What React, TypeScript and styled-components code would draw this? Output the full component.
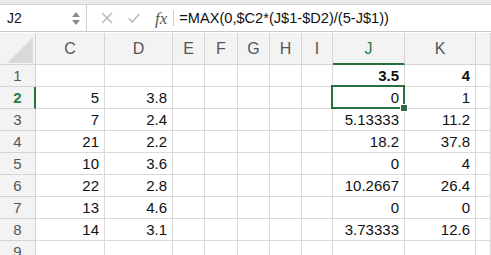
import React from "react";
import styled, { createGlobalStyle, css } from "styled-components";

const GlobalStyle = createGlobalStyle`
  html, body { margin: 0; padding: 0; background: #ffffff; }
  body { font-family: "Liberation Sans", Arial, sans-serif; overflow: hidden; }
  * { box-sizing: border-box; }
`;

const Page = styled.div`
  width: 491px;
  height: 255px;
  overflow: hidden;
  background: #ffffff;
`;

const TopStrip = styled.div`
  height: 5px;
  background: #e9e9e9;
  border-bottom: 1px solid #d2d2d2;
`;

const FormulaBar = styled.div`
  height: 27px;
  display: flex;
  align-items: stretch;
  border-bottom: 1px solid #c9c9c9;
  margin-bottom: 1px;
  background: #ffffff;
`;

const NameBox = styled.div`
  width: 87px;
  display: flex;
  align-items: center;
  justify-content: space-between;
  padding: 0 6px 0 7px;
  border-right: 1px solid #cfcfcf;
  font-size: 14px;
  color: #111;
`;

const Spinner = styled.div`
  display: flex;
  flex-direction: column;
  gap: 3px;
  align-items: center;
`;

const Tri = styled.div<{ $up?: boolean }>`
  width: 0;
  height: 0;
  border-left: 4px solid transparent;
  border-right: 4px solid transparent;
  ${(p) =>
    p.$up
      ? css`border-bottom: 5px solid #8a8a8a;`
      : css`border-top: 5px solid #8a8a8a;`}
`;

const Tools = styled.div`
  display: flex;
  align-items: center;
  padding-left: 14px;
  gap: 15px;
`;

const IconBox = styled.div`
  width: 12px;
  height: 12px;
  display: flex;
`;

const Fx = styled.div`
  font-family: "Liberation Serif", "Times New Roman", serif;
  font-style: italic;
  font-size: 17px;
  color: #555;
  padding-right: 6px;
  border-right: 1px solid #d0d0d0;
  height: 16px;
  line-height: 15px;
  display: flex;
  align-items: center;
`;

const Formula = styled.div`
  display: flex;
  align-items: center;
  padding-left: 5px;
  font-size: 14.6px;
  color: #111;
  white-space: nowrap;
`;

const Grid = styled.div`
  display: grid;
  grid-template-columns: 36px 69px 68px 32px 33px 32px 32px 31px 72px 71px 1fr;
  grid-auto-rows: 22px;
  grid-template-rows: 32px;
`;

const Corner = styled.div`
  background: #f3f3f3;
  border-right: 1px solid #d4d4d4;
  border-bottom: 1px solid #d4d4d4;
  display: flex;
  align-items: flex-end;
  justify-content: flex-end;
  padding: 0 2px 1px 0;
`;

const ColHead = styled.div<{ $sel?: boolean }>`
  background: #f3f3f3;
  border-right: 1px solid #d4d4d4;
  border-bottom: 1px solid #d4d4d4;
  display: flex;
  align-items: center;
  justify-content: center;
  font-size: 16px;
  color: #555;
  padding-top: 1px;
  ${(p) =>
    p.$sel &&
    css`
      color: #2a7a44;
      border-bottom: 2px solid #2a6e3f;
      padding-top: 2px;
    `}
`;

const RowHead = styled.div<{ $sel?: boolean }>`
  background: #f3f3f3;
  border-right: 1px solid #d4d4d4;
  border-bottom: 1px solid #d4d4d4;
  display: flex;
  align-items: center;
  justify-content: center;
  font-size: 15px;
  color: #555;
  ${(p) =>
    p.$sel &&
    css`
      color: #2a7a44;
      font-weight: bold;
      border-right: 2px solid #2a6e3f;
      padding-left: 1px;
    `}
`;

const Cell = styled.div<{ $bold?: boolean; $sel?: boolean }>`
  position: relative;
  border-right: 1px solid #dadada;
  border-bottom: 1px solid #dadada;
  display: flex;
  align-items: center;
  justify-content: flex-end;
  padding-right: 5px;
  font-size: 15px;
  color: #111;
  font-weight: ${(p) => (p.$bold ? "bold" : "normal")};
  ${(p) =>
    p.$sel &&
    css`
      &::after {
        content: "";
        position: absolute;
        left: -2px;
        top: -2px;
        right: -1px;
        bottom: -1px;
        border: 2px solid #2a6e3f;
      }
      &::before {
        content: "";
        position: absolute;
        right: -4px;
        bottom: -4px;
        width: 6px;
        height: 6px;
        background: #2a6e3f;
        border: 1px solid #ffffff;
        z-index: 2;
      }
    `}
`;

const cols = ["C", "D", "E", "F", "G", "H", "I", "J", "K", ""];

type Row = { n: number; c: string; d: string; j: string; k: string; bold?: boolean };

const rows: Row[] = [
  { n: 1, c: "", d: "", j: "3.5", k: "4", bold: true },
  { n: 2, c: "5", d: "3.8", j: "0", k: "1" },
  { n: 3, c: "7", d: "2.4", j: "5.13333", k: "11.2" },
  { n: 4, c: "21", d: "2.2", j: "18.2", k: "37.8" },
  { n: 5, c: "10", d: "3.6", j: "0", k: "4" },
  { n: 6, c: "22", d: "2.8", j: "10.2667", k: "26.4" },
  { n: 7, c: "13", d: "4.6", j: "0", k: "0" },
  { n: 8, c: "14", d: "3.1", j: "3.73333", k: "12.6" },
  { n: 9, c: "", d: "", j: "", k: "" },
];

export default function App() {
  return (
    <Page>
      <GlobalStyle />
      <TopStrip />
      <FormulaBar>
        <NameBox>
          <span>J2</span>
          <Spinner>
            <Tri $up />
            <Tri />
          </Spinner>
        </NameBox>
        <Tools>
          <IconBox>
            <svg width="12" height="12" viewBox="0 0 12 12">
              <path d="M1 1 L11 11 M11 1 L1 11" stroke="#bdbdbd" strokeWidth="1.6" fill="none" />
            </svg>
          </IconBox>
          <IconBox>
            <svg width="12" height="12" viewBox="0 0 12 12">
              <path d="M0.8 6.5 L4.3 10 L11.2 2" stroke="#bdbdbd" strokeWidth="1.6" fill="none" />
            </svg>
          </IconBox>
          <Fx>fx</Fx>
        </Tools>
        <Formula>=MAX(0,$C2*(J$1-$D2)/(5-J$1))</Formula>
      </FormulaBar>
      <Grid>
        <Corner>
          <svg width="26" height="26" viewBox="0 0 26 26">
            <polygon points="26,0 26,26 0,26" fill="#d9d9d9" />
          </svg>
        </Corner>
        {cols.map((c, i) => (
          <ColHead key={i} $sel={c === "J"}>
            {c}
          </ColHead>
        ))}
        {rows.map((r) => (
          <React.Fragment key={r.n}>
            <RowHead $sel={r.n === 2}>{r.n}</RowHead>
            <Cell>{r.c}</Cell>
            <Cell>{r.d}</Cell>
            <Cell />
            <Cell />
            <Cell />
            <Cell />
            <Cell />
            <Cell $bold={r.bold} $sel={r.n === 2}>
              {r.j}
            </Cell>
            <Cell $bold={r.bold}>{r.k}</Cell>
            <Cell />
          </React.Fragment>
        ))}
      </Grid>
    </Page>
  );
}
